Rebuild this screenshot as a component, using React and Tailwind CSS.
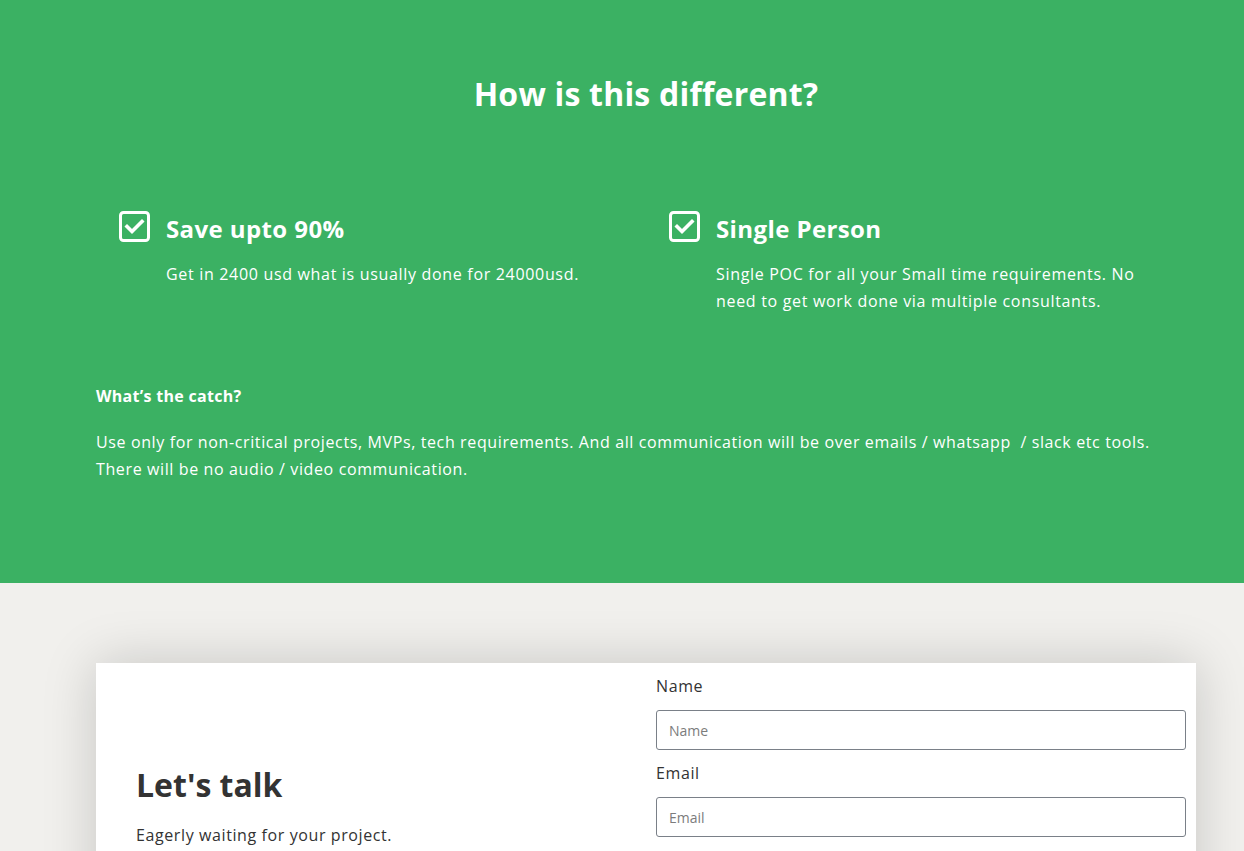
import React from 'react';

const F = { fontFamily: '"Open Sans", "DejaVu Sans", sans-serif' };

const Check = () => (
  <svg width="31" height="31" viewBox="0 0 31 31" fill="none" className="shrink-0">
    <rect x="1.5" y="1.5" width="28" height="28" rx="3" stroke="white" strokeWidth="3" />
    <path d="M8 15.5l5 5 10-10" stroke="white" strokeWidth="3.6" strokeLinecap="square" />
  </svg>
);

const Feature = ({ title, text }) => (
  <div className="flex gap-[16px] px-[23px]">
    <div className="pt-[10px]"><Check /></div>
    <div>
      <h3 className="text-[24px] font-bold leading-[56px] tracking-[0.4px]">{title}</h3>
      <p className="mt-[4px] text-[16px] leading-[27px] tracking-[0.68px]">{text}</p>
    </div>
  </div>
);

export default function App() {
  return (
    <div className="min-h-screen bg-[#f1f0ed] text-white" style={F}>
      <section className="bg-[#3bb163] pt-[72px] pb-[100px]">
        <div className="w-[1100px] ml-[96px]">
          <h2 className="text-center text-[32px] font-bold leading-[44px] tracking-[0.2px]">How is this different?</h2>
          <div className="grid grid-cols-2 mt-[85px]">
            <Feature title="Save upto 90%" text="Get in 2400 usd what is usually done for 24000usd." />
            <Feature title="Single Person" text="Single POC for all your Small time requirements. No need to get work done via multiple consultants." />
          </div>
          <h4 className="mt-[68px] text-[16px] font-bold leading-[27px] tracking-[0.3px]">What’s the catch?</h4>
          <p className="mt-[19px] text-[16px] leading-[27px] tracking-[0.62px]">
            Use only for non-critical projects, MVPs, tech requirements. And all communication will be over emails / whatsapp&nbsp; / slack etc tools. There will be no audio / video communication.
          </p>
        </div>
      </section>
      <section className="pt-[80px] pb-10">
        <div className="w-[1100px] ml-[96px] bg-white shadow-[0_0_50px_rgba(0,0,0,0.18)] grid grid-cols-2 text-[#333]">
          <div className="px-10 pt-[100px]">
            <h2 className="text-[32px] font-bold leading-[44px]">Let's talk</h2>
            <p className="mt-[15px] text-[16px] leading-[27px] tracking-[0.6px]">Eagerly waiting for your project.</p>
          </div>
          <div className="px-[10px] pt-[10px] pb-10">
            <label className="block text-[16px] leading-[27px] tracking-[0.6px]">Name</label>
            <input placeholder="Name" className="mt-[10px] w-full h-[40px] border border-[#7a8088] rounded-[3px] px-3 text-[14px] placeholder-[#7c7c7c] outline-none" />
            <label className="block mt-[10px] text-[16px] leading-[27px] tracking-[0.6px]">Email</label>
            <input placeholder="Email" className="mt-[10px] w-full h-[40px] border border-[#7a8088] rounded-[3px] px-3 text-[14px] placeholder-[#7c7c7c] outline-none" />
            <label className="block mt-[18px] text-[16px] leading-[27px] tracking-[0.6px]">Message</label>
            <textarea placeholder="Message" className="mt-[10px] w-full h-[120px] border border-[#7a8088] rounded-[3px] px-3 py-2 text-[14px] outline-none" />
          </div>
        </div>
      </section>
    </div>
  );
}
